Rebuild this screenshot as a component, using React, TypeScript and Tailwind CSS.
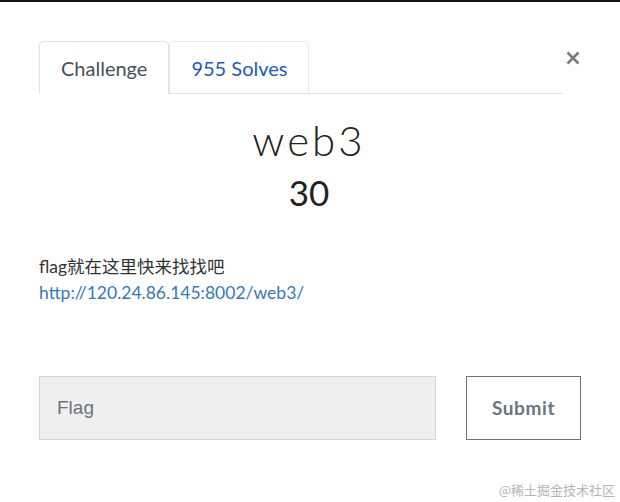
export default function App() {
  return (
    <div className="relative w-[620px] h-[502px] overflow-hidden bg-white border-t-2 border-[#141414] font-['Lato','Noto_Sans_CJK_SC',sans-serif] text-[#212529]">
      <div className="px-[39px] pt-[39px]">
        {/* tabs + close */}
        <div className="flex items-start">
          <ul className="flex w-[525px] border-b border-[#dee2e6]">
            <li className="-mb-px">
              <div className="h-[53px] px-[21px] flex items-center rounded-t-[5px] border border-[#dee2e6] border-b-white bg-white text-[20px] text-[#495057]">
                Challenge
              </div>
            </li>
            <li className="-mb-px">
              <div className="h-[52px] px-[21px] flex items-center rounded-t-[5px] border border-[#e6e9ec] border-b-0 text-[20px] text-[#1a5db8]">
                955 Solves
              </div>
            </li>
          </ul>
          <button className="ml-[2px] mt-[9px] w-[16px] h-[16px] flex items-center justify-center">
            <svg width="14" height="14" viewBox="0 0 14 14">
              <path d="M1.5 1.5 L12.5 12.5 M12.5 1.5 L1.5 12.5" stroke="#7a7a7a" strokeWidth="2.6" strokeLinecap="butt" />
            </svg>
          </button>
        </div>

        {/* title */}
        <div className="flex flex-col items-center pr-[2px]">
          <h2 className="mt-[20px] text-[42px] leading-[52px] font-light tracking-[3px] text-[#222]">web3</h2>
          <h3 className="mt-[4px] text-[35px] leading-[44px] font-normal text-[#222]">30</h3>
        </div>

        {/* description */}
        <div className="mt-[40px] text-[17.5px] leading-[26px]">
          <p className="text-[#333]">flag就在这里快来找找吧</p>
          <a className="text-[#337ab7]">http://120.24.86.145:8002/web3/</a>
        </div>

        {/* flag form */}
        <div className="mt-[70px] flex items-center">
          <div className="w-[397px] h-[64px] flex items-center px-[17px] bg-[#efefef] border border-[#ced4da] text-[19px] text-[#6c757d] font-['Liberation_Sans',sans-serif]">
            Flag
          </div>
          <button className="ml-[30px] w-[115px] h-[64px] border border-[#6c757d] bg-white text-[19px] font-bold text-[#6c757d] tracking-[0.6px]">
            Submit
          </button>
        </div>
      </div>

      <div className="absolute right-[5px] bottom-[6px] text-[13px] leading-none text-[#b4b4b4] font-['Noto_Sans_CJK_SC',sans-serif]">
        @稀土掘金技术社区
      </div>
    </div>
  );
}
